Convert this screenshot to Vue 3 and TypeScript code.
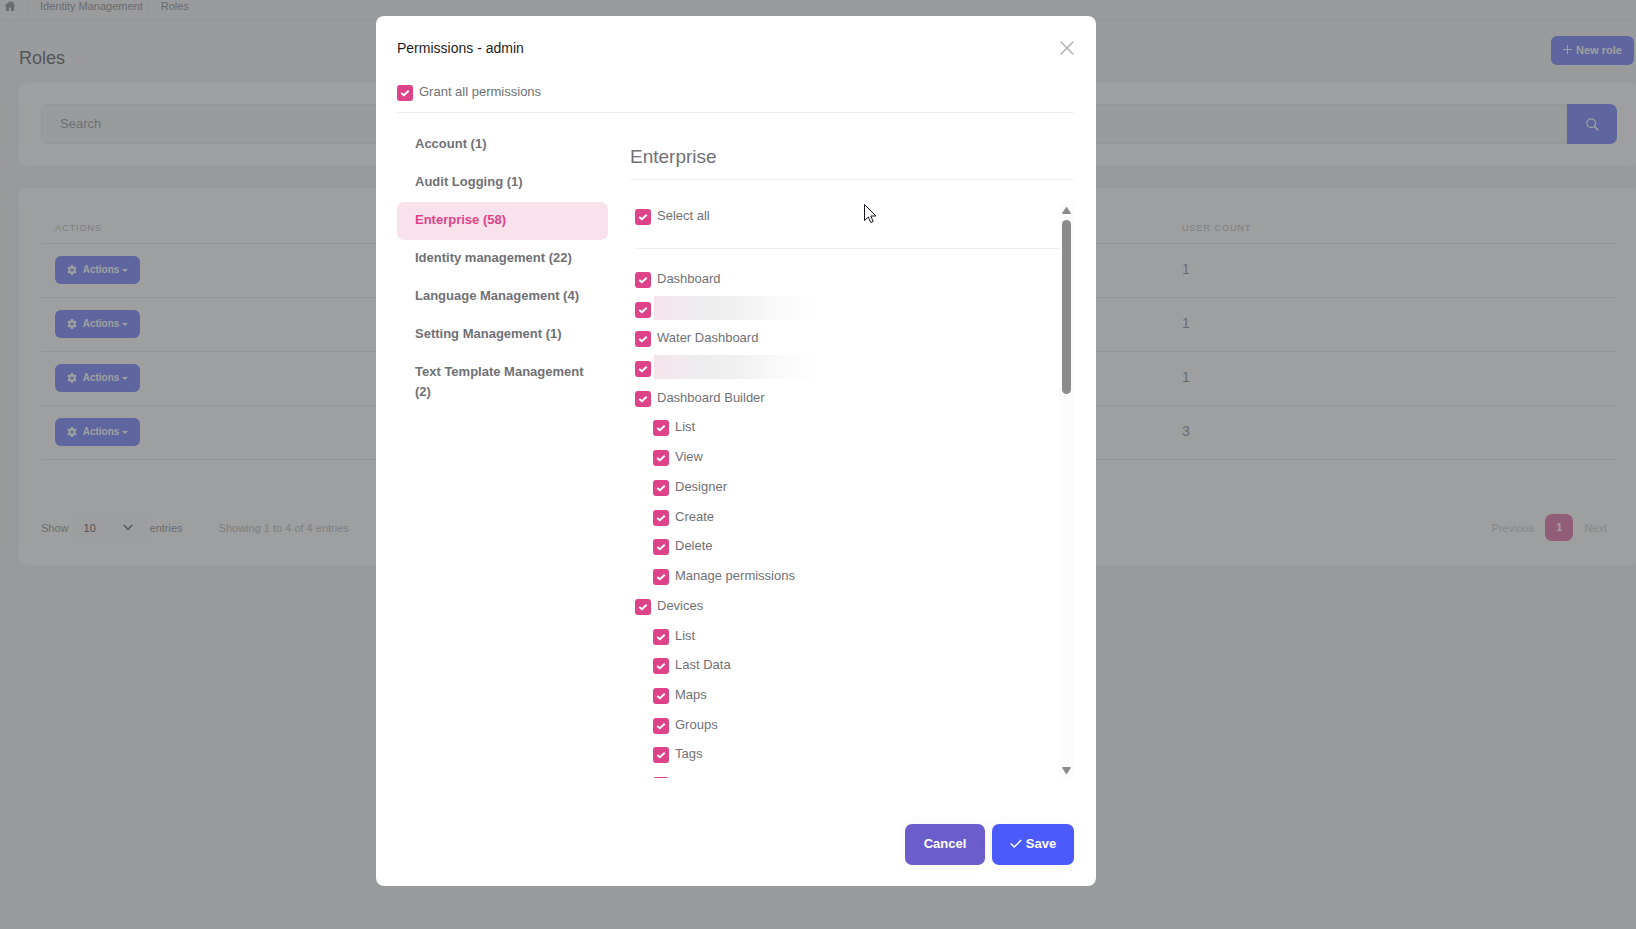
<script setup lang="ts">
import { ref } from 'vue'

interface Permission {
  id: string
  label: string
  child?: boolean
  masked?: boolean
}

const userCounts = [1, 1, 1, 3]

const groups = [
  { name: 'Account', count: 1 },
  { name: 'Audit Logging', count: 1 },
  { name: 'Enterprise', count: 58 },
  { name: 'Identity management', count: 22 },
  { name: 'Language Management', count: 4 },
  { name: 'Setting Management', count: 1 },
  { name: 'Text Template Management', count: 2 },
]
const activeGroup = ref('Enterprise')

const permissions: Permission[] = [
  { id: 'dashboard', label: 'Dashboard' },
  { id: 'masked-1', label: '', masked: true },
  { id: 'water', label: 'Water Dashboard' },
  { id: 'masked-2', label: '', masked: true },
  { id: 'builder', label: 'Dashboard Builder' },
  { id: 'builder-list', label: 'List', child: true },
  { id: 'builder-view', label: 'View', child: true },
  { id: 'builder-designer', label: 'Designer', child: true },
  { id: 'builder-create', label: 'Create', child: true },
  { id: 'builder-delete', label: 'Delete', child: true },
  { id: 'builder-manage', label: 'Manage permissions', child: true },
  { id: 'devices', label: 'Devices' },
  { id: 'devices-list', label: 'List', child: true },
  { id: 'devices-last', label: 'Last Data', child: true },
  { id: 'devices-maps', label: 'Maps', child: true },
  { id: 'devices-groups', label: 'Groups', child: true },
  { id: 'devices-tags', label: 'Tags', child: true },
  { id: 'devices-more', label: '', child: true },
]
</script>

<template>
  <div class="page">
    <nav class="crumbs">
      <a href="#" class="crumb home">
        <svg width="10" height="10" viewBox="0 0 10 10"><path d="M5 0 0 4.6V5.4H1V10H4V6.6H6V10H9V5.4H10V4.6L8.6 3.3V.6H7.2V2Z" fill="currentColor" /></svg>
      </a>
      <a href="#" class="crumb">Identity Management</a>
      <a href="#" class="crumb">Roles</a>
    </nav>

    <main class="main">
      <header class="page-head">
        <h1>Roles</h1>
        <button type="button" class="btn new-role">
          <svg width="9" height="9" viewBox="0 0 9 9"><path d="M4.5 0V9M0 4.5H9" stroke="currentColor" fill="none" /></svg>
          New role
        </button>
      </header>

      <section class="card search-card">
        <form class="search" @submit.prevent>
          <input id="search" type="text" placeholder="Search" />
          <button type="submit" class="search-btn">
            <svg width="13" height="13" viewBox="0 0 13 13"><circle cx="5.2" cy="5.2" r="4.3" fill="none" stroke="currentColor" stroke-width="1.3" /><path d="M8.4 8.4 12.4 12.4" stroke="currentColor" stroke-width="1.6" /></svg>
          </button>
        </form>
      </section>

      <section class="card table-card">
        <table>
          <thead>
            <tr>
              <th>ACTIONS</th>
              <th class="count">USER COUNT
                <svg class="sort" width="8" height="5" viewBox="0 0 8 5"><path d="M1 1 4 4 7 1" fill="none" stroke="currentColor" /></svg>
              </th>
            </tr>
          </thead>
          <tbody>
            <tr v-for="(count, i) in userCounts" :key="i">
              <td>
                <button type="button" class="btn action">
                  <svg width="10" height="10" viewBox="0 0 10 10">
                    <path fill="currentColor" fill-rule="evenodd" d="M4 0H6L6.3 1.4 7.2 1.9 8.6 1.4 9.6 3.1 8.5 4.2V5.8L9.6 6.9 8.6 8.6 7.2 8.1 6.3 8.6 6 10H4L3.7 8.6 2.8 8.1 1.4 8.6.4 6.9 1.5 5.8V4.2L.4 3.1 1.4 1.4 2.8 1.9 3.7 1.4ZM5 3.4A1.6 1.6 0 1 0 5 6.6 1.6 1.6 0 1 0 5 3.4Z" />
                  </svg>
                  <span>Actions<i class="caret"></i></span>
                </button>
              </td>
              <td class="count">{{ count }}</td>
            </tr>
          </tbody>
        </table>

        <footer class="table-foot">
          <label for="size">Show</label>
          <select id="size"><option>10</option></select>
          <span>entries</span>
          <span class="info">Showing 1 to 4 of 4 entries</span>
          <nav class="pager">
            <a href="#">Previous</a>
            <a href="#" class="current">1</a>
            <a href="#">Next</a>
          </nav>
        </footer>
      </section>
    </main>

    <div class="backdrop">
      <div class="modal" role="dialog" aria-labelledby="modal-title">
        <header class="modal-head">
          <h2 id="modal-title">Permissions - admin</h2>
          <button type="button" class="close">
            <svg width="14" height="14" viewBox="0 0 14 14"><path d="M1 1 13 13M13 1 1 13" stroke="currentColor" stroke-width="1.6" stroke-linecap="round" /></svg>
          </button>
        </header>
        <div class="check grant">
          <input id="grant-all" type="checkbox" checked />
          <label for="grant-all">Grant all permissions</label>
        </div>

        <div class="modal-body">
          <nav class="groups">
            <button
              v-for="g in groups"
              :key="g.name"
              type="button"
              :class="{ active: g.name === activeGroup }"
              @click="activeGroup = g.name"
            >{{ g.name }} ({{ g.count }})</button>
          </nav>

          <section class="panel">
            <h3>{{ activeGroup }}</h3>
            <div class="scroll">
              <div class="scroll-content">
                <div class="check select-all">
                  <input id="select-all" type="checkbox" checked />
                  <label for="select-all">Select all</label>
                </div>
                <div class="list">
                  <div v-for="p in permissions" :key="p.id" class="check" :class="{ child: p.child }">
                    <input :id="p.id" type="checkbox" checked />
                    <label :for="p.id" :class="{ mask: p.masked }">{{ p.label }}</label>
                  </div>
                </div>
              </div>
              <div class="track">
                <svg width="9" height="7" viewBox="0 0 9 7"><path d="M4.5 0Q5 0 5.4.7L8.8 5.9Q9 7 8 7H1Q0 7 .2 5.9L3.6.7Q4 0 4.5 0Z" fill="#8b8b8b" /></svg>
                <div class="thumb"></div>
                <svg class="down" width="9" height="7" viewBox="0 0 9 7"><path d="M4.5 7Q5 7 5.4 6.3L8.8 1.1Q9 0 8 0H1Q0 0 .2 1.1L3.6 6.3Q4 7 4.5 7Z" fill="#8b8b8b" /></svg>
              </div>
            </div>
          </section>
        </div>

        <footer class="modal-foot">
          <button type="button" class="cancel">Cancel</button>
          <button type="button" class="save">
            <svg width="12" height="9" viewBox="0 0 12 9"><path d="M.8 4.6 4.2 8 11.2 1" fill="none" stroke="currentColor" stroke-width="1.4" /></svg>
            Save
          </button>
        </footer>
      </div>
    </div>

    <svg class="pointer" width="13" height="20" viewBox="0 0 13 20"><path d="M.5.5V16.5L4.3 13 6.8 18.6 9.2 17.5 6.8 12H12Z" fill="#fff" stroke="#15152a" /></svg>
  </div>
</template>

<style>
body {
  margin: 0;
  background: #f3f4f5;
}
</style>

<style scoped>
.page {
  position: relative;
  min-height: 100vh;
  overflow: hidden;
  background: #f3f4f5;
  color: #707175;
  font: 13px/20px "Liberation Sans", Arial, sans-serif;
}
.page * {
  box-sizing: border-box;
}
a {
  color: inherit;
  text-decoration: none;
}
button,
input,
select {
  font: inherit;
}
button {
  border: 0;
  padding: 0;
  display: inline-flex;
  align-items: center;
  justify-content: center;
  font-weight: 700;
  cursor: pointer;
}
h1,
h2,
h3 {
  margin: 0;
  font-weight: 400;
}

.crumbs {
  display: flex;
  height: 20px;
  border-bottom: 1px solid #e8e8ed;
  box-shadow: 0 0 12px rgba(80, 80, 200, 0.08);
  font-size: 11px;
  color: #6c6c70;
}
.crumb {
  display: flex;
  align-items: center;
  padding: 0 5px 8px 12px;
  border-right: 1px solid #e8e8ec;
}
.crumb.home {
  padding: 0 12px 8px 5px;
}
.crumb:last-child {
  border: 0;
}

.main {
  padding-left: 19px;
}
.page-head {
  display: flex;
  justify-content: space-between;
  padding: 16px 2px 0 0;
  height: 63px;
}
.page-head h1 {
  font-size: 18px;
  line-height: 44px;
  color: #2c2c30;
}
.btn {
  border-radius: 6px;
  background: #4b5bfb;
  color: #fff;
}
.new-role {
  width: 83px;
  height: 29px;
  padding-bottom: 2px;
  gap: 4px;
  font-size: 11px;
}
.card {
  margin-right: -3px;
  border-radius: 8px;
  background: #fff;
  box-shadow: 0 0 20px rgba(80, 80, 220, 0.07);
}
.search-card {
  padding: 21px 22px 22px;
  margin-bottom: 22px;
}
.search {
  display: flex;
  height: 40px;
}
.search input {
  flex: 1;
  min-width: 0;
  border: 1px solid #e4e4e7;
  border-radius: 7px 0 0 7px;
  background: #f4f4f5;
  padding: 0 18px;
  outline: 0;
}
.search input::placeholder {
  color: #77777b;
}
.search-btn {
  width: 50px;
  border-radius: 0 7px 7px 0;
  background: #4b5bfb;
  color: #fff;
}
.table-card {
  padding: 21px 22px 22px;
}
table {
  width: 100%;
  border-collapse: collapse;
  font-size: 14px;
}
th {
  height: 34px;
  padding: 5px 14px 0;
  border-bottom: 1px solid #e2e2e7;
  color: #a2a2a6;
  font-size: 9px;
  font-weight: 400;
  letter-spacing: 1px;
  text-align: left;
}
td {
  height: 54px;
  padding: 0 14px;
  border-bottom: 1px solid #e2e2e7;
  color: #6c6c70;
}
.count {
  width: 449px;
}
td.count {
  padding-bottom: 2px;
}
.sort {
  margin-left: 4px;
  color: #f0f0f2;
}
.action {
  width: 85px;
  height: 28px;
  gap: 6px;
  font-size: 10px;
}
.action span {
  display: flex;
  align-items: center;
  gap: 3px;
}
.caret {
  border: 3px solid transparent;
  border-top-color: currentColor;
  border-bottom: 0;
}
.table-foot {
  display: flex;
  align-items: center;
  gap: 3px;
  margin-top: 53px;
  font-size: 11px;
  height: 30px;
}
.table-foot select {
  width: 75px;
  height: 30px;
  padding: 0 12px;
  border: 0;
  border-radius: 6px;
  appearance: none;
  color: #222;
  background: #f9f9fa url("data:image/svg+xml,%3Csvg xmlns='http://www.w3.org/2000/svg' width='10' height='7'%3E%3Cpath d='M1 1 5 5.4 9 1' fill='none' stroke='%23333' stroke-width='1.5'/%3E%3C/svg%3E") no-repeat right 14px center;
}
.info {
  margin-left: 33px;
  color: #a6a6aa;
}
.pager {
  display: flex;
  align-items: center;
  gap: 11px;
  margin-left: auto;
  margin-right: 10px;
  color: #bcbcc0;
}
.pager .current {
  width: 28px;
  border-radius: 7px;
  background: #de4289;
  color: #fff;
  font-weight: 700;
  line-height: 27px;
  text-align: center;
}

.backdrop {
  position: absolute;
  inset: 0;
  display: flex;
  justify-content: center;
  align-items: flex-start;
  padding: 16px 164px 0 0;
  background: rgba(105, 107, 109, 0.65);
}
.modal {
  width: 720px;
  padding: 20px 22px 21px 21px;
  border-radius: 8px;
  background: #fff;
}
.modal-head {
  display: flex;
  align-items: center;
  justify-content: space-between;
  height: 24px;
  color: #1e1e22;
}
.modal-head h2 {
  font-size: 14px;
}
.close {
  background: none;
  color: #b4b5b7;
}
.check {
  display: flex;
  align-items: center;
}
.check input {
  flex: none;
  appearance: none;
  width: 16px;
  height: 16px;
  margin: 0;
  border-radius: 3px;
  background: #de4289 url("data:image/svg+xml,%3Csvg xmlns='http://www.w3.org/2000/svg' width='10' height='8'%3E%3Cpath d='M1.2 3.9 3.9 6.2 8.7 1.8' fill='none' stroke='white' stroke-width='2'/%3E%3C/svg%3E") no-repeat center;
}
.check label {
  margin-left: 6px;
  padding-bottom: 2px;
}
.grant {
  padding: 22px 0 8px;
  border-bottom: 1px solid #efefef;
}
.modal-body {
  display: flex;
  gap: 22px;
  padding-top: 12px;
}
.groups {
  flex: 0 0 211px;
  display: flex;
  flex-direction: column;
  padding-top: 1px;
}
.groups button {
  display: block;
  padding: 8px 18px 10px;
  border-radius: 7px;
  background: none;
  color: inherit;
  text-align: left;
}
.groups button.active {
  background: #fae2ec;
  color: #de4289;
}
.panel {
  flex: 1;
  min-width: 0;
}
.panel h3 {
  padding: 20px 0 11px;
  margin-bottom: 22px;
  border-bottom: 1px solid #efefef;
  font-size: 19px;
  line-height: 23px;
}
.scroll {
  display: flex;
  height: 576px;
}
.scroll-content {
  flex: 1;
  padding-left: 5px;
  overflow: hidden;
}
.select-all {
  height: 47px;
  padding-bottom: 17px;
  border-bottom: 1px solid #efefef;
}
.list {
  display: grid;
  grid-auto-rows: 1fr;
  height: 535px;
  margin-top: 16px;
}
.child {
  margin-left: 18px;
}
.check .mask {
  width: 164px;
  height: 24px;
  margin: 0 0 4px 3px;
  background: linear-gradient(90deg, #f5e4eb, #eeecee 25%, #f0f0f0 50%, #fafafa 78%, #fff);
}
.track {
  display: flex;
  flex-direction: column;
  align-items: center;
  width: 15px;
  padding: 5px 0 4px;
  background: #fcfcfc;
}
.thumb {
  width: 9px;
  height: 174px;
  margin-top: 6px;
  border-radius: 5px;
  background: #8b8b8b;
}
.down {
  margin-top: auto;
}
.modal-foot {
  display: flex;
  justify-content: flex-end;
  gap: 7px;
  padding-top: 46px;
}
.modal-foot button {
  height: 41px;
  padding-bottom: 2px;
  border-radius: 7px;
  color: #fff;
  box-shadow: 0 0 14px rgba(80, 80, 120, 0.05);
}
.cancel {
  width: 80px;
  background: #6c5dcc;
}
.save {
  width: 82px;
  gap: 4px;
  background: #4b5bfb;
}
.pointer {
  position: absolute;
  left: 864px;
  top: 204px;
}
</style>
